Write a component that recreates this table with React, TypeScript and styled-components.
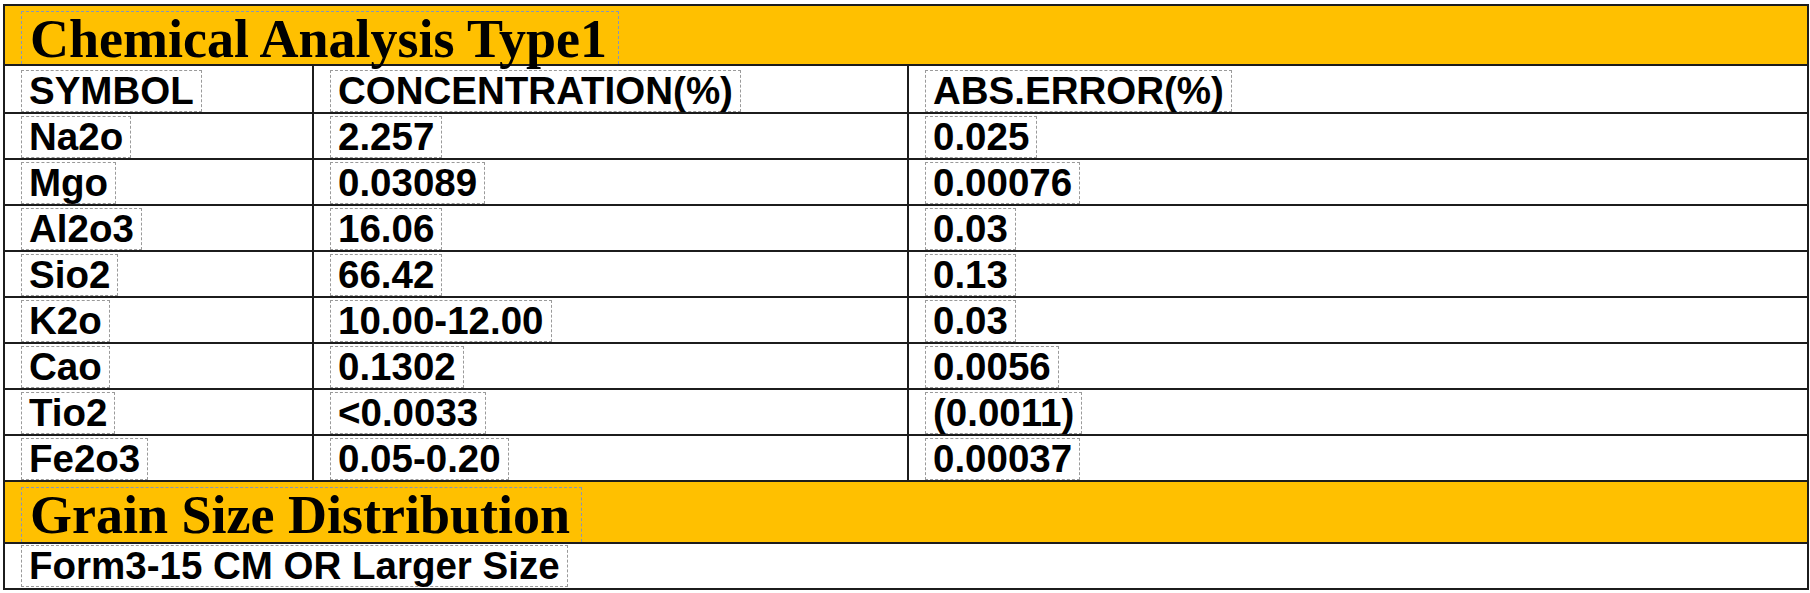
import React from "react";
import styled, { createGlobalStyle } from "styled-components";

const Global = createGlobalStyle`
  html, body { margin: 0; padding: 0; background: #ffffff; }
  body { font-family: "Liberation Sans", Arial, sans-serif; }
`;

const Page = styled.div`
  padding: 4px 1px 0 3px;
  width: 1810px;
  box-sizing: border-box;
`;

const Table = styled.div`
  border: 2px solid #1c1c1c;
  display: flex;
  flex-direction: column;
  background: #fff;
`;

const TitleBar = styled.div<{ $h: number }>`
  height: ${(p) => p.$h}px;
  box-sizing: border-box;
  background: #ffc000;
  border-bottom: 2px solid #1c1c1c;
  display: flex;
  align-items: stretch;
  padding: 5px 0 0 16px;
`;

const TitleText = styled.div`
  border: 1px dashed #8797b8;
  border-bottom: none;
  padding: 0 11px 0 8px;
  font-family: "Liberation Serif", "Times New Roman", serif;
  font-weight: bold;
  font-size: 54px;
  line-height: 54px;
  color: #000;
  white-space: nowrap;
`;

const Row = styled.div<{ $h: number }>`
  height: ${(p) => p.$h}px;
  box-sizing: border-box;
  border-bottom: 2px solid #1c1c1c;
  display: grid;
  grid-template-columns: 309px 595px 1fr;
`;

const FullRow = styled.div`
  height: 44px;
  box-sizing: border-box;
  display: flex;
  padding-left: 16px;
`;

const Cell = styled.div<{ $last?: boolean }>`
  border-right: ${(p) => (p.$last ? "none" : "2px solid #1c1c1c")};
  display: flex;
  align-items: flex-start;
  padding: 2px 0 0 16px;
  min-width: 0;
`;

const Value = styled.div<{ $top?: number }>`
  border: 1px dashed #9a9a9a;
  margin-top: ${(p) => p.$top ?? 0}px;
  height: 42px;
  box-sizing: border-box;
  padding: 0 7px 0 7px;
  font-family: "Liberation Sans", Arial, sans-serif;
  font-weight: bold;
  font-size: 38.5px;
  line-height: 40px;
  color: #000;
  white-space: nowrap;
`;

const rows: [string, string, string][] = [
  ["Na2o", "2.257", "0.025"],
  ["Mgo", "0.03089", "0.00076"],
  ["Al2o3", "16.06", "0.03"],
  ["Sio2", "66.42", "0.13"],
  ["K2o", "10.00-12.00", "0.03"],
  ["Cao", "0.1302", "0.0056"],
  ["Tio2", "<0.0033", "(0.0011)"],
  ["Fe2o3", "0.05-0.20", "0.00037"],
];

export default function App() {
  return (
    <>
      <Global />
      <Page>
        <Table>
          <TitleBar $h={60}>
            <TitleText>Chemical Analysis Type1</TitleText>
          </TitleBar>
          <Row $h={48}>
            <Cell>
              <Value $top={2}>SYMBOL</Value>
            </Cell>
            <Cell>
              <Value $top={2}>CONCENTRATION(%)</Value>
            </Cell>
            <Cell $last>
              <Value $top={2}>ABS.ERROR(%)</Value>
            </Cell>
          </Row>
          {rows.map(([s, c, e]) => (
            <Row $h={46} key={s}>
              <Cell>
                <Value>{s}</Value>
              </Cell>
              <Cell>
                <Value>{c}</Value>
              </Cell>
              <Cell $last>
                <Value>{e}</Value>
              </Cell>
            </Row>
          ))}
          <TitleBar $h={62}>
            <TitleText>Grain Size Distribution</TitleText>
          </TitleBar>
          <FullRow>
            <Value $top={1}>Form3-15 CM OR Larger Size</Value>
          </FullRow>
        </Table>
      </Page>
    </>
  );
}
